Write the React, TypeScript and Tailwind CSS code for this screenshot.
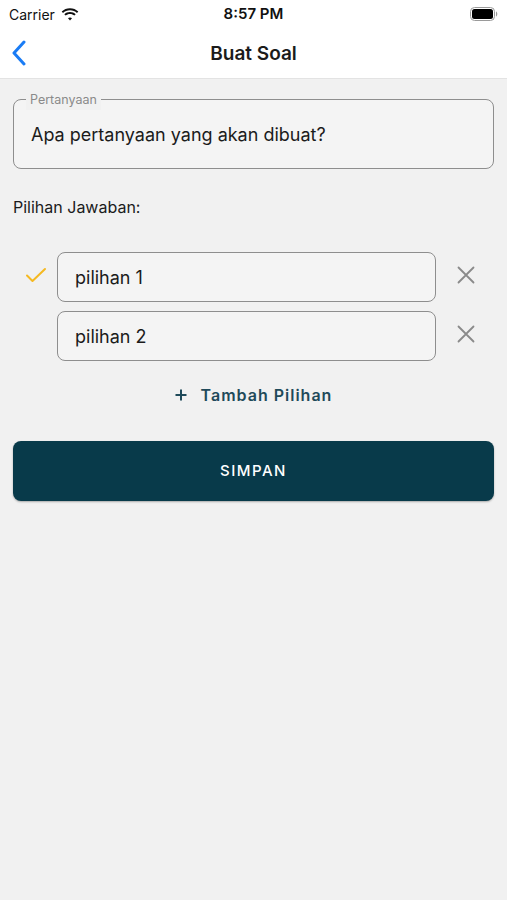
import React from "react";

function Wifi() {
  return (
    <svg width="18" height="13" viewBox="0 0 18 13">
      <path d="M9 2.2c2.7 0 5.2 1 7 2.8l1.3-1.4C15.1 1.4 12.2.2 9 .2S2.9 1.4.7 3.6L2 5c1.8-1.8 4.3-2.8 7-2.8z" fill="#111" />
      <path d="M9 5.9c1.7 0 3.2.6 4.4 1.7l1.3-1.4C13.2 4.8 11.2 4 9 4S4.8 4.8 3.3 6.2l1.3 1.4C5.8 6.5 7.3 5.9 9 5.9z" fill="#111" />
      <path d="M9 9.5c.8 0 1.5.3 2 .8L9 12.5 7 10.3c.5-.5 1.2-.8 2-.8z" fill="#111" />
    </svg>
  );
}

function Battery() {
  return (
    <svg width="28" height="14" viewBox="0 0 28 14">
      <rect x="0.5" y="0.5" width="24" height="13" rx="4" fill="none" stroke="#9a9a9a" strokeWidth="1" />
      <rect x="2" y="2" width="21" height="10" rx="2.5" fill="#000" />
      <path d="M26 4.5v5c.8-.3 1.3-1.3 1.3-2.5S26.8 4.8 26 4.5z" fill="#9a9a9a" />
    </svg>
  );
}

export default function App() {
  return (
    <div className="w-[507px] h-[900px] bg-[#f1f1f1] flex flex-col" style={{ fontFamily: "Inter, 'Noto Sans', sans-serif" }}>
      <div className="bg-white border-b border-[#e3e3e3]">
        <div className="h-[28px] flex items-center justify-between px-[9px] relative">
          <div className="flex items-center gap-[6px] text-[14px] text-[#111]">
            <span>Carrier</span>
            <Wifi />
          </div>
          <div className="absolute left-0 right-0 text-center text-[15px] font-semibold text-[#111] pointer-events-none">8:57 PM</div>
          <Battery />
        </div>
        <div className="h-[50px] flex items-center relative">
          <svg className="absolute left-[10px] top-[12px]" width="18" height="26" viewBox="0 0 18 26">
            <path d="M14 2L4 13l10 11" fill="none" stroke="#1a7cf5" strokeWidth="3" strokeLinecap="round" strokeLinejoin="round" />
          </svg>
          <div className="w-full text-center text-[19px] font-semibold text-[#1b1b1b] pt-[2px]">Buat Soal</div>
        </div>
      </div>

      <div className="px-[13px] pt-[20px]">
        <div className="relative h-[70px] border border-[#8e8e8e] rounded-[8px] bg-[#f4f4f4] flex items-center px-[17px]">
          <span className="absolute left-[12px] top-[-9px] px-[4px] bg-[#f1f1f1] text-[12.5px] text-[#8a8a8a]">Pertanyaan</span>
          <span className="text-[18px] text-[#1b1b1b]">Apa pertanyaan yang akan dibuat?</span>
        </div>

        <div className="mt-[26px] text-[16px] text-[#1b1b1b]">Pilihan Jawaban:</div>

        <div className="mt-[33px] flex flex-col gap-[9px]">
          {["pilihan 1", "pilihan 2"].map((t, i) => (
            <div key={t} className="flex items-center">
              <div className="w-[44px] flex justify-center pl-[2px] pb-[5px]">
                {i === 0 && (
                  <svg width="22" height="16" viewBox="0 0 22 16">
                    <path d="M2 8.5l5.5 5.5L20 2" fill="none" stroke="#f5b921" strokeWidth="2" strokeLinecap="round" strokeLinejoin="round" />
                  </svg>
                )}
              </div>
              <div className="w-[379px] h-[50px] border border-[#8e8e8e] rounded-[8px] bg-[#f4f4f4] flex items-center px-[17px] text-[18px] text-[#1b1b1b]">{t}</div>
              <div className="flex-1 flex justify-center pb-[5px] pl-[2px]">
                <svg width="18" height="18" viewBox="0 0 18 18">
                  <path d="M1.5 1.5l15 15M16.5 1.5l-15 15" stroke="#8a8a8a" strokeWidth="1.8" strokeLinecap="round" />
                </svg>
              </div>
            </div>
          ))}
        </div>

        <div className="mt-[22px] flex justify-center items-center gap-[14px] text-[#1f4a5a] font-semibold text-[16px] tracking-[1px]">
          <svg width="12" height="12" viewBox="0 0 12 12">
            <path d="M6 0.5v11M0.5 6h11" stroke="#1f4a5a" strokeWidth="2" />
          </svg>
          <span>Tambah Pilihan</span>
        </div>

        <div className="mt-[34px] h-[60px] bg-[#083a4a] rounded-[8px] flex items-center justify-center text-white text-[15px] font-medium tracking-[1.5px] shadow-[0_1px_2px_rgba(0,0,0,0.3)]">
          SIMPAN
        </div>
      </div>
    </div>
  );
}
